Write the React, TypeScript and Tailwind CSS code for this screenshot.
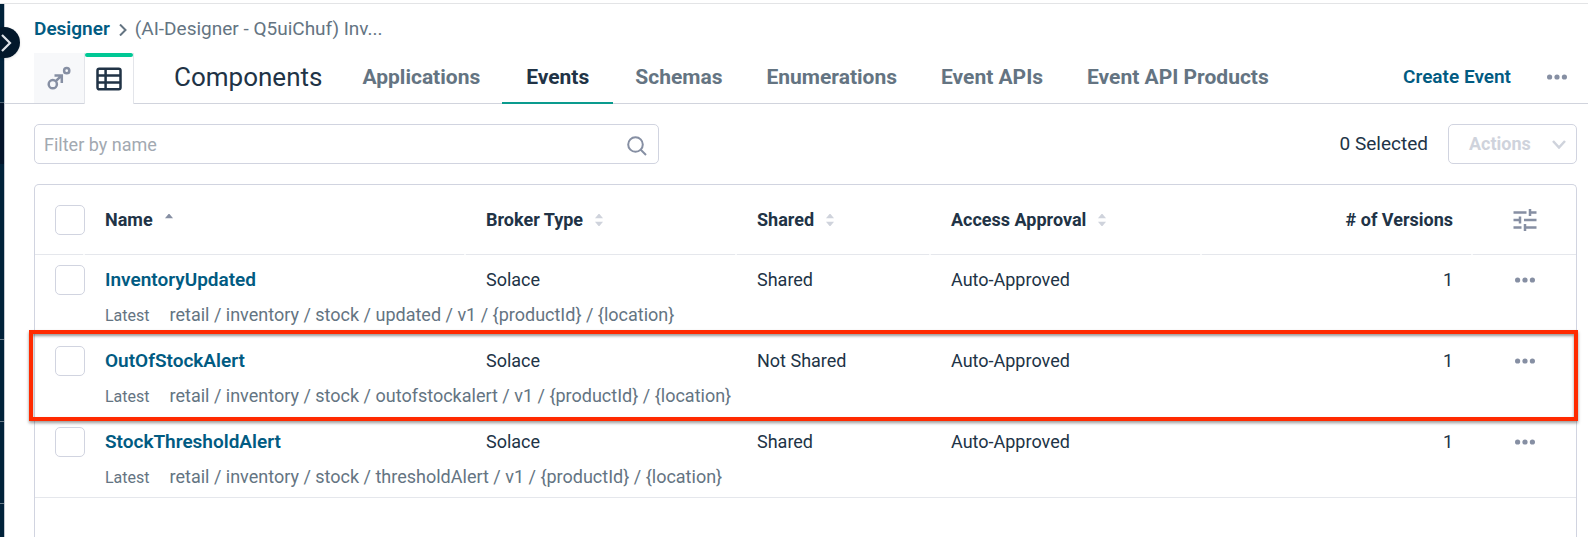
import { ReactNode } from "react";

const tabs = ["Applications", "Events", "Schemas", "Enumerations", "Event APIs", "Event API Products"];

const events = [
  {
    name: "InventoryUpdated",
    broker: "Solace",
    shared: "Shared",
    approval: "Auto-Approved",
    versions: 1,
    topic: "retail / inventory / stock / updated / v1 / {productId} / {location}",
  },
  {
    name: "OutOfStockAlert",
    broker: "Solace",
    shared: "Not Shared",
    approval: "Auto-Approved",
    versions: 1,
    topic: "retail / inventory / stock / outofstockalert / v1 / {productId} / {location}",
    highlighted: true,
  },
  {
    name: "StockThresholdAlert",
    broker: "Solace",
    shared: "Shared",
    approval: "Auto-Approved",
    versions: 1,
    topic: "retail / inventory / stock / thresholdAlert / v1 / {productId} / {location}",
  },
];

function DotsIcon() {
  return (
    <svg width="20" height="6" viewBox="0 0 20 6" fill="#868fa3">
      <circle cx="2.6" cy="3" r="2.6" />
      <circle cx="10" cy="3" r="2.6" />
      <circle cx="17.4" cy="3" r="2.6" />
    </svg>
  );
}

function GraphIcon() {
  return (
    <svg width="24" height="24" viewBox="0 0 24 24" fill="none" stroke="#868fa3" strokeWidth="2.5">
      <circle cx="5.8" cy="18.2" r="4.1" />
      <path d="M8.800 15.200l5.400-5.400M7.500 9.500h7.300v7.500" />
      <circle cx="19.7" cy="4.7" r="2.6" />
    </svg>
  );
}

function TableIcon() {
  return (
    <svg width="26" height="24" viewBox="0 0 26 24" fill="none" stroke="#213346" strokeWidth="2.5">
      <rect x="1.5" y="1.7" width="23" height="20.6" rx="1.8" />
      <path d="M1.5 8.6h23M1.5 15.4h23M9.6 1.7v20.6" />
    </svg>
  );
}

function TuneIcon() {
  return (
    <svg width="24" height="24" viewBox="0 0 24 24" fill="none" stroke="#868fa3" strokeWidth="2.5">
      <path d="M.5 4.5h13M17 4.500h6.500M17 1v7M.5 12h6.500M7 8.500v7M11 12h12.500M.5 19.500h8M12 16v7M12 19.500h11.500" />
    </svg>
  );
}

function SortIcon({ active }: { active?: boolean }) {
  return (
    <svg width="8" height="12" viewBox="0 0 8 12" className={active ? "fill-[#868fa3]" : "fill-[#cfd3dc]"}>
      <path d="M0 4.200L3.500 0h1L8 4.200z" />
      {!active && <path d="M0 7.800L3.500 12h1L8 7.800z" />}
    </svg>
  );
}

function SortHeader({ children, active }: { children: ReactNode; active?: boolean }) {
  return (
    <button type="button" className="flex items-center gap-3 font-bold">
      {children}
      <SortIcon active={active} />
    </button>
  );
}

function Check({ label }: { label: string }) {
  return (
    <input
      type="checkbox"
      aria-label={label}
      className="block size-[30px] appearance-none rounded-[5px] border border-[#d1d4e0] bg-white checked:bg-[#00c895]"
    />
  );
}

function Sidebar() {
  return (
    <aside className="relative flex w-[5px] shrink-0 flex-col border-r border-[#c3c8d0] bg-[#01223a]">
      <div className="h-[99px] border-b border-[#4d6373]" />
      <div className="h-[61px] bg-[#03142a]" />
      <div className="h-44 border-b border-[#6b7d8a]" />
      <div className="h-[82px] border-b border-[#6b7d8a]" />
      <div className="h-[82px] border-b border-[#6b7d8a]" />
      <button
        type="button"
        aria-label="Expand navigation"
        className="absolute -left-[11px] top-[23px] flex size-[31px] items-center justify-end rounded-full bg-[#03182b] pr-2 shadow"
      >
        <svg width="12" height="18" viewBox="0 0 12 18" fill="none" stroke="#dfe3e8" strokeWidth="2.2">
          <path d="M2 1l8 8-8 8" />
        </svg>
      </button>
    </aside>
  );
}

function Header() {
  return (
    <header className="border-b border-[#d1d4dd] pl-[29px] pr-[21px]">
      <nav aria-label="Breadcrumb" className="flex h-[49px] items-center gap-2 pt-0.5 text-[19px] text-[#647482]">
        <a href="#" className="font-semibold text-[#015b82]">
          Designer
        </a>
        <svg width="9" height="12" viewBox="0 0 9 12" fill="none" stroke="#647482" strokeWidth="2">
          <path d="M2 .5L7.500 6 2 11.500" />
        </svg>
        <span>(AI-Designer - Q5uiChuf) Inv...</span>
      </nav>

      <div className="flex h-[50px] items-stretch">
        <button type="button" aria-label="Graph view" className="flex w-[50px] items-center justify-center bg-[#f7f8fa]">
          <GraphIcon />
        </button>
        <button
          type="button"
          aria-label="List view"
          className="relative -mb-px flex w-[50px] items-center justify-center border-x border-[#e3e5ea] bg-white"
        >
          <span className="absolute inset-x-0 top-0 h-1 rounded-full bg-[#00c895]" />
          <TableIcon />
        </button>

        <h1 className="ml-10 flex items-center pb-0.5 text-[26px] text-[#213346]">Components</h1>

        <nav aria-label="Components" className="ml-[18px] flex">
          {tabs.map((tab) => (
            <a
              key={tab}
              href="#"
              className={
                tab === "Events"
                  ? "-mb-px flex items-center border-b-2 border-[#0a9b8e] px-6 text-[21px] font-bold text-[#213346]"
                  : "-mb-px flex items-center border-b-2 border-transparent px-[22px] text-[21px] font-bold text-[#647482]"
              }
            >
              {tab}
            </a>
          ))}
        </nav>

        <div className="ml-auto flex items-center gap-9 pb-0.5">
          <button type="button" className="text-[19px] font-semibold text-[#015b82]">
            Create Event
          </button>
          <button type="button" aria-label="More actions">
            <DotsIcon />
          </button>
        </div>
      </div>
    </header>
  );
}

function Toolbar() {
  return (
    <div className="flex items-center justify-between">
      <div className="relative w-[625px]">
        <input
          type="text"
          aria-label="Filter by name"
          placeholder="Filter by name"
          className="block h-10 w-full rounded-[5px] border border-[#d1d4e0] pl-[9px] pr-12 text-lg placeholder:text-[#a2a9b1]"
        />
        <svg
          width="20"
          height="20"
          viewBox="0 0 20 20"
          fill="none"
          stroke="#868fa3"
          strokeWidth="2"
          className="absolute right-3 top-3"
        >
          <circle cx="8.500" cy="8.500" r="7.300" />
          <path d="M13.500 13.500l5.500 5.500" />
        </svg>
      </div>
      <div className="flex items-center gap-5 text-lg text-[#213346]">
        <span className="text-[19px]">0 Selected</span>
        <button
          type="button"
          disabled
          className="flex h-10 w-[129px] items-center justify-between rounded-[5px] border border-[#d1d4e0] pl-5 pr-[10px] font-bold text-[#cfd3dc]"
        >
          Actions
          <svg width="14" height="9" viewBox="0 0 14 9" fill="none" stroke="#cfd3dc" strokeWidth="2.500">
            <path d="M1 1l6 6.500L13 1" />
          </svg>
        </button>
      </div>
    </div>
  );
}

// header cell with the small break in the rule at its right edge
const headCell =
  "relative border-b border-[#e5e7ec] after:absolute after:-bottom-px after:right-0 after:h-px after:w-0.5 after:bg-[#f8f9fa]";

function EventTable() {
  return (
    <table className="w-full table-fixed border-separate border-spacing-0 text-left text-lg text-[#213346]">
      <colgroup>
        <col className="w-[50px]" />
        <col />
        <col className="w-[271px]" />
        <col className="w-[194px]" />
        <col className="w-[271px]" />
        <col className="w-[271px]" />
        <col className="w-[103px]" />
      </colgroup>
      <thead>
        <tr className="h-[70px]">
          <th className={`pl-5 ${headCell}`}>
            <Check label="Select all" />
          </th>
          <th className={`pl-5 ${headCell}`}>
            <SortHeader active>Name</SortHeader>
          </th>
          <th className={`pl-5 ${headCell}`}>
            <SortHeader>Broker Type</SortHeader>
          </th>
          <th className={`pl-5 ${headCell}`}>
            <SortHeader>Shared</SortHeader>
          </th>
          <th className={`pl-5 ${headCell}`}>
            <SortHeader>Access Approval</SortHeader>
          </th>
          <th className={`pr-5 text-right font-bold ${headCell}`}># of Versions</th>
          <th className="border-b border-[#e5e7ec]">
            <button type="button" aria-label="Column settings" className="mx-auto block">
              <TuneIcon />
            </button>
          </th>
        </tr>
      </thead>
      {events.map((event) => (
        <tbody key={event.name} className="group relative">
          <tr className="h-[50px]">
            <td className="pl-5">
              <Check label={`Select ${event.name}`} />
            </td>
            <td className="pl-5">
              <a href="#" className="text-[19px] font-semibold text-[#015b82]">
                {event.name}
              </a>
            </td>
            <td className="pl-5">{event.broker}</td>
            <td className="pl-5">{event.shared}</td>
            <td className="pl-5">{event.approval}</td>
            <td className="pr-5 text-right">{event.versions}</td>
            <td>
              <button type="button" aria-label={`Actions for ${event.name}`} className="mx-auto block">
                <DotsIcon />
              </button>
            </td>
          </tr>
          <tr className="h-[31px] align-top leading-5 text-[#647482]">
            <td className="border-[#e5e7ec] group-last:border-b" />
            <td colSpan={6} className="border-[#e5e7ec] pl-5 group-last:border-b">
              <span className="mr-5 text-base leading-5">Latest</span>
              {event.topic}
              {event.highlighted && (
                <span className="pointer-events-none absolute -bottom-1 -left-[6px] -right-[2px] -top-[6px] border-4 border-[#ff2a00] shadow-[0_2px_3px_rgba(0,0,0,0.4),inset_0_2px_3px_rgba(0,0,0,0.4)]" />
              )}
            </td>
          </tr>
        </tbody>
      ))}
    </table>
  );
}

export default function App() {
  return (
    <div className="flex min-h-screen flex-col bg-white pt-[3px] font-['Roboto',sans-serif]">
      <div className="flex flex-1 border-t border-[#e3e4e6]">
        <Sidebar />
        <div className="flex min-w-0 flex-1 flex-col">
          <Header />
          <main className="flex flex-1 flex-col gap-5 pl-[29px] pr-[11px] pt-5">
            <Toolbar />
            <section className="flex-1 rounded-t-[5px] border border-b-0 border-[#d1d4e0]">
              <EventTable />
            </section>
          </main>
        </div>
      </div>
    </div>
  );
}
